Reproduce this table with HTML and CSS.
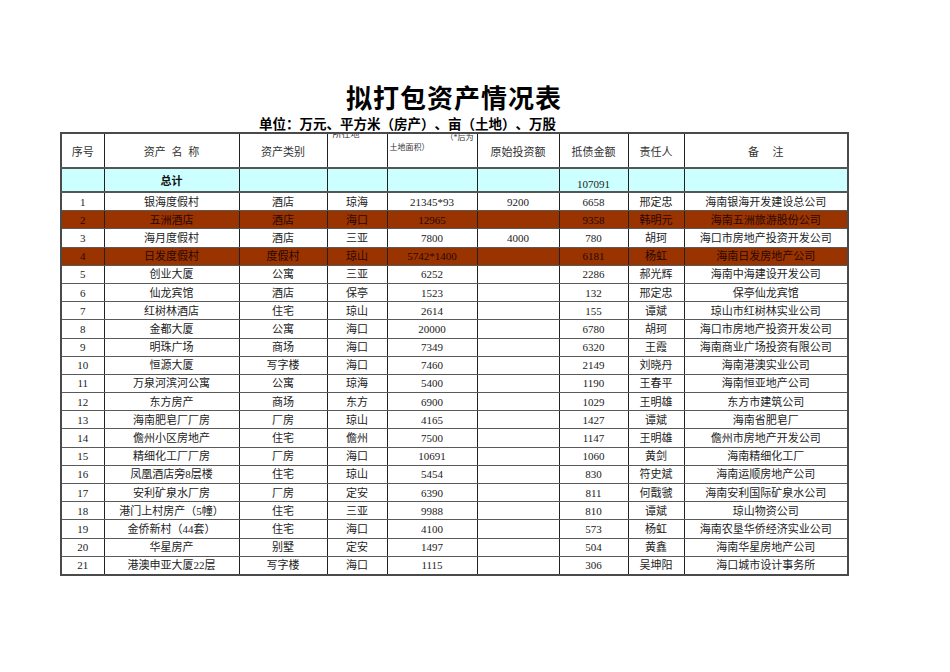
FILE: index.html
```html
<!DOCTYPE html>
<html lang="zh-CN">
<head>
<meta charset="utf-8">
<title>拟打包资产情况表</title>
<link rel="stylesheet" href="styles.css">
</head>
<body>
<div class="page">
  <h1 class="title">拟打包资产情况表</h1>
  <div class="unit">单位：万元、平方米（房产）、亩（土地）、万股</div>
  <table class="sheet">
    <colgroup>
      <col class="c1"><col class="c2"><col class="c3"><col class="c4"><col class="c5"><col class="c6"><col class="c7"><col class="c8"><col class="c9">
    </colgroup>
    <thead>
      <tr class="head">
        <th>序号</th>
        <th class="sp">资产 名 称</th>
        <th>资产类别</th>
        <th class="clip"><div class="loc">所在地</div></th>
        <th class="clip"><div class="area"><div class="a1">（*后为</div><div class="a2">土地面积）</div></div></th>
        <th>原始投资额</th>
        <th>抵债金额</th>
        <th>责任人</th>
        <th>备　 注</th>
      </tr>
    </thead>
    <tbody>
      <tr class="total"><td></td><td class="bold">总计</td><td></td><td></td><td></td><td></td><td class="bottom">107091</td><td></td><td></td></tr>
      <tr class="row"><td>1</td><td>银海度假村</td><td>酒店</td><td>琼海</td><td>21345*93</td><td>9200</td><td>6658</td><td>邢定忠</td><td>海南银海开发建设总公司</td></tr>
      <tr class="row mark"><td>2</td><td>五洲酒店</td><td>酒店</td><td>海口</td><td>12965</td><td></td><td>9358</td><td>韩明元</td><td>海南五洲旅游股份公司</td></tr>
      <tr class="row"><td>3</td><td>海月度假村</td><td>酒店</td><td>三亚</td><td>7800</td><td>4000</td><td>780</td><td>胡珂</td><td>海口市房地产投资开发公司</td></tr>
      <tr class="row mark"><td>4</td><td>日发度假村</td><td>度假村</td><td>琼山</td><td>5742*1400</td><td></td><td>6181</td><td>杨虹</td><td>海南日发房地产公司</td></tr>
      <tr class="row"><td>5</td><td>创业大厦</td><td>公寓</td><td>三亚</td><td>6252</td><td></td><td>2286</td><td>郝光辉</td><td>海南中海建设开发公司</td></tr>
      <tr class="row"><td>6</td><td>仙龙宾馆</td><td>酒店</td><td>保亭</td><td>1523</td><td></td><td>132</td><td>邢定忠</td><td>保亭仙龙宾馆</td></tr>
      <tr class="row"><td>7</td><td>红树林酒店</td><td>住宅</td><td>琼山</td><td>2614</td><td></td><td>155</td><td>谭斌</td><td>琼山市红树林实业公司</td></tr>
      <tr class="row"><td>8</td><td>金都大厦</td><td>公寓</td><td>海口</td><td>20000</td><td></td><td>6780</td><td>胡珂</td><td>海口市房地产投资开发公司</td></tr>
      <tr class="row"><td>9</td><td>明珠广场</td><td>商场</td><td>海口</td><td>7349</td><td></td><td>6320</td><td>王霞</td><td>海南商业广场投资有限公司</td></tr>
      <tr class="row"><td>10</td><td>恒源大厦</td><td>写字楼</td><td>海口</td><td>7460</td><td></td><td>2149</td><td>刘晓丹</td><td>海南港澳实业公司</td></tr>
      <tr class="row"><td>11</td><td>万泉河滨河公寓</td><td>公寓</td><td>琼海</td><td>5400</td><td></td><td>1190</td><td>王春平</td><td>海南恒亚地产公司</td></tr>
      <tr class="row"><td>12</td><td>东方房产</td><td>商场</td><td>东方</td><td>6900</td><td></td><td>1029</td><td>王明雄</td><td>东方市建筑公司</td></tr>
      <tr class="row"><td>13</td><td>海南肥皂厂厂房</td><td>厂房</td><td>琼山</td><td>4165</td><td></td><td>1427</td><td>谭斌</td><td>海南省肥皂厂</td></tr>
      <tr class="row"><td>14</td><td>儋州小区房地产</td><td>住宅</td><td>儋州</td><td>7500</td><td></td><td>1147</td><td>王明雄</td><td>儋州市房地产开发公司</td></tr>
      <tr class="row"><td>15</td><td>精细化工厂厂房</td><td>厂房</td><td>海口</td><td>10691</td><td></td><td>1060</td><td>黄剑</td><td>海南精细化工厂</td></tr>
      <tr class="row"><td>16</td><td>凤凰酒店旁8层楼</td><td>住宅</td><td>琼山</td><td>5454</td><td></td><td>830</td><td>符史斌</td><td>海南运顺房地产公司</td></tr>
      <tr class="row"><td>17</td><td>安利矿泉水厂房</td><td>厂房</td><td>定安</td><td>6390</td><td></td><td>811</td><td>何戬虢</td><td>海南安利国际矿泉水公司</td></tr>
      <tr class="row"><td>18</td><td>港门上村房产（5幢）</td><td>住宅</td><td>三亚</td><td>9988</td><td></td><td>810</td><td>谭斌</td><td>琼山物资公司</td></tr>
      <tr class="row"><td>19</td><td>金侨新村（44套）</td><td>住宅</td><td>海口</td><td>4100</td><td></td><td>573</td><td>杨虹</td><td>海南农垦华侨经济实业公司</td></tr>
      <tr class="row"><td>20</td><td>华星房产</td><td>别墅</td><td>定安</td><td>1497</td><td></td><td>504</td><td>黄鑫</td><td>海南华星房地产公司</td></tr>
      <tr class="row"><td>21</td><td>港澳申亚大厦22层</td><td>写字楼</td><td>海口</td><td>1115</td><td></td><td>306</td><td>吴坤阳</td><td>海口城市设计事务所</td></tr>
    </tbody>
  </table>
</div>
</body>
</html>
```

FILE: styles.css
```css
html, body {
  margin: 0;
  padding: 0;
  background: #ffffff;
}

body {
  font-family: "Liberation Serif", "Noto Sans CJK SC", serif;
  color: #222222;
  text-spacing-trim: space-all;
}

.page {
  padding: 82px 0 0 60px;
}

.title {
  margin: 0;
  width: 788px;
  text-align: center;
  font-family: "Noto Sans CJK SC", sans-serif;
  font-weight: 700;
  font-size: 26px;
  line-height: 30px;
  letter-spacing: 1px;
  color: #000000;
}

.unit {
  margin: 2px 0 0 199px;
  font-family: "Noto Sans CJK SC", sans-serif;
  font-weight: 700;
  font-size: 13.5px;
  line-height: 18px;
  color: #000000;
}

.sheet {
  border-collapse: collapse;
  table-layout: fixed;
  width: 788px;
  border: 2px solid #4a4a4a;
  font-size: 11px;
}

.c1 { width: 43px; }
.c2 { width: 135px; }
.c3 { width: 88px; }
.c4 { width: 60px; }
.c5 { width: 90px; }
.c6 { width: 82px; }
.c7 { width: 69px; }
.c8 { width: 56px; }
.c9 { width: 164px; }

.sheet th,
.sheet td {
  padding: 0;
  border-left: 1px solid #222222;
  border-right: 1px solid #222222;
  border-top: 1px solid #5a5a5a;
  border-bottom: 1px solid #5a5a5a;
  text-align: center;
  vertical-align: middle;
  white-space: nowrap;
  overflow: hidden;
  font-weight: 400;
}

.head th {
  height: 33px;
  color: #333333;
  border-bottom: 2px solid #555555;
}

.sp {
  word-spacing: 3px;
}

.clip {
  vertical-align: top !important;
}

.loc {
  padding-left: 5px;
  text-align: left;
  font-size: 9px;
  line-height: 11px;
  margin-top: -5px;
  height: 38px;
  overflow: hidden;
  color: #333333;
}

.area {
  height: 33px;
  overflow: hidden;
  font-size: 8px;
  line-height: 10px;
  color: #333333;
}

.a1 {
  text-align: right;
  padding-right: 3px;
  margin-top: -1px;
}

.a2 {
  text-align: left;
  padding-left: 2px;
}

.total td {
  height: 22px;
  background: #ccffff;
  border-bottom: 2px solid #555555;
}

.total .bold {
  font-family: "Noto Sans CJK SC", sans-serif;
  font-weight: 700;
  color: #111111;
}

.total .bottom {
  vertical-align: bottom;
  line-height: 14px;
}

.row td {
  height: 17.2px;
  line-height: 14px;
}

.mark td {
  background: #993300;
  color: #2a0800;
}
```
